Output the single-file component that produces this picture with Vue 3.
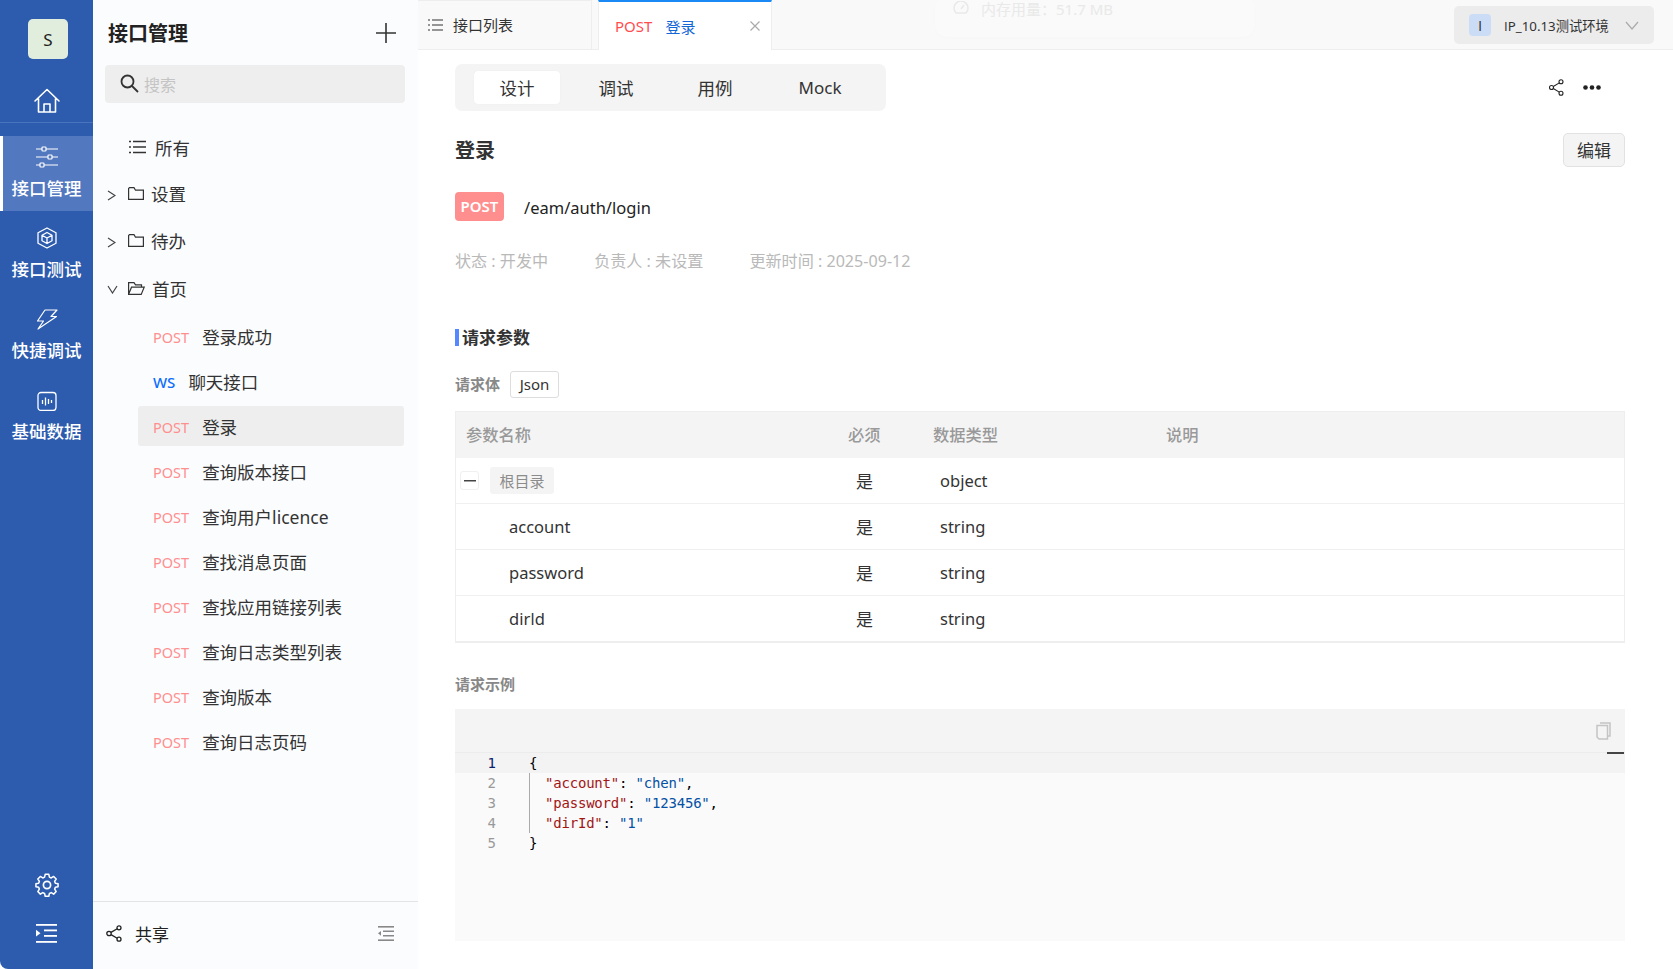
<script setup>
const railItems = [
  { label: '接口管理', icon: 'sliders', active: true },
  { label: '接口测试', icon: 'cube' },
  { label: '快捷调试', icon: 'bolt' },
  { label: '基础数据', icon: 'chart' }
]
const apis = [
  ['POST', '登录成功'], ['WS', '聊天接口'], ['POST', '登录'], ['POST', '查询版本接口'],
  ['POST', '查询用户licence'], ['POST', '查找消息页面'], ['POST', '查找应用链接列表'],
  ['POST', '查询日志类型列表'], ['POST', '查询版本'], ['POST', '查询日志页码']
]
const fields = ['account', 'password']
</script>

<template>
  <div class="app">
    <aside class="rail">
      <div class="avatar">S</div>
      <div class="home">
        <svg width="28" height="28" viewBox="0 0 28 28" fill="none" stroke="#fff" stroke-width="1.6" stroke-linejoin="round" stroke-linecap="round"><path d="M2 14 14 2.5 26 14M5.5 11.5V25h17V11.5M11 25v-8h6v8"/></svg>
      </div>
      <div v-for="item in railItems" :key="item.label" class="rail-item" :class="{ active: item.active }">
        <svg v-if="item.icon === 'sliders'" width="22" height="22" viewBox="0 0 22 22" fill="none" stroke="#fff" stroke-width="1.2"><path d="M0 3h6M10 3h12M0 11h12M16 11h6M0 19h4M8 19h14"/><rect x="6" y="1" width="4" height="4" rx=".8"/><rect x="12" y="9" width="4" height="4" rx=".8"/><rect x="4" y="17" width="4" height="4" rx=".8"/></svg>
        <svg v-else-if="item.icon === 'cube'" width="22" height="22" viewBox="0 0 22 22" fill="none" stroke="#fff" stroke-width="1.3" stroke-linejoin="round"><path d="M11 1 20 5.800V16.200L11 21 2 16.200V5.800Z"/><path d="M11 5.500 16 8.300V13.700L11 16.500 6 13.700V8.300ZM6 8.300l5 2.700 5-2.700M11 11v5.500"/></svg>
        <svg v-else-if="item.icon === 'bolt'" width="22" height="22" viewBox="0 -1 22 22" fill="none" stroke="#fff" stroke-width="1.2" stroke-linejoin="round"><path d="M9 1H21L15 7.500H20.500L2 20 7.500 12H1.500Z"/></svg>
        <svg v-else width="22" height="22" viewBox="-1 -2.500 22 22" fill="none" stroke="#fff" stroke-width="1.3"><rect x="1" y="1" width="18" height="18" rx="3"/><path d="M5.500 8.500v4M8.500 6v8M11.500 7.500v5M14.500 8.500v3"/></svg>
        <span>{{ item.label }}</span>
      </div>
      <div class="rail-bottom">
        <svg width="24" height="24" viewBox="0 0 24 24" fill="none" stroke="#fff" stroke-width="1.7" stroke-linejoin="round"><circle cx="12" cy="12" r="3.600"/><path d="M10 1.500h4l.7 3.100 2 .9 2.700-1.700 2.800 2.900-1.700 2.700.8 2 3 .6v3.300l-3 .6-.8 2 1.700 2.700-2.800 2.900-2.700-1.700-2 .9-.7 3.100h-4l-.7-3.100-2-.9-2.700 1.700-2.800-2.900 1.700-2.700-.8-2-3-.6v-3.300l3-.6.800-2-1.700-2.700 2.800-2.900 2.700 1.700 2-.9z" transform="translate(1.200 0) scale(.9)"/></svg>
        <svg width="22" height="19" viewBox="0 0 22 19" fill="#fff"><rect width="21" height="1.800"/><rect x="8" y="5.500" width="13" height="1.800"/><rect x="8" y="11" width="13" height="1.800"/><rect y="17" width="21" height="1.800"/><path d="M0 5.800 4.500 9.200 0 12.600Z"/></svg>
      </div>
    </aside>

    <section class="panel">
      <header class="panel-head">
        <h2>接口管理</h2>
        <svg width="20" height="20" viewBox="0 0 20 20" stroke="#333" stroke-width="1.600"><path d="M0 10h20M10 0v20"/></svg>
      </header>
      <div class="search">
        <svg width="19" height="19" viewBox="0 0 19 19" fill="none" stroke="#333" stroke-width="1.800"><circle cx="7.500" cy="7.500" r="6"/><path d="m12 12 6 6"/></svg>
        <span>搜索</span>
      </div>
      <div class="tree">
        <div class="tree-row all">
          <svg width="17" height="14" viewBox="0 0 17 14" stroke="#333" stroke-width="1.300"><path d="M4 1.500h13M4 7h13M4 12.500h13M0 1.500h2M0 7h2M0 12.500h2"/></svg>
          <span>所有</span>
        </div>
        <div class="tree-row tall">
          <svg class="chev" width="9" height="11" viewBox="0 0 9 11" fill="none" stroke="#444" stroke-width="1.200"><path d="m1 1 7 4.500L1 10"/></svg>
          <svg width="16" height="13" viewBox="0 0 16 13" fill="none" stroke="#333" stroke-width="1.200"><path d="M.6 1.500V12.400h14.800V3.200H7.500L6 .6H1.500z"/></svg>
          <span>设置</span>
        </div>
        <div class="tree-row">
          <svg class="chev" width="9" height="11" viewBox="0 0 9 11" fill="none" stroke="#444" stroke-width="1.200"><path d="m1 1 7 4.500L1 10"/></svg>
          <svg width="16" height="13" viewBox="0 0 16 13" fill="none" stroke="#333" stroke-width="1.200"><path d="M.6 1.500V12.400h14.800V3.200H7.500L6 .6H1.500z"/></svg>
          <span>待办</span>
        </div>
        <div class="tree-row open">
          <svg class="chev" width="11" height="9" viewBox="0 0 11 9" fill="none" stroke="#444" stroke-width="1.200"><path d="m1 1 4.500 7L10 1"/></svg>
          <svg width="17" height="13" viewBox="0 0 17 13" fill="none" stroke="#333" stroke-width="1.200"><path d="M.6 12.400V.6h5.400l1.500 2.200h6v2.400M.6 12.400h12.600l3-7.200H3.500z"/></svg>
          <span>首页</span>
        </div>
        <div class="api-list">
          <div v-for="(api, i) in apis" :key="api[1]" class="api-row" :class="{ selected: i === 2 }">
            <span class="method" :class="api[0] === 'WS' ? 'ws' : 'post'">{{ api[0] }}</span>
            <span>{{ api[1] }}</span>
          </div>
        </div>
      </div>
      <footer class="panel-foot">
        <svg width="16" height="17" viewBox="0 0 16 17" fill="none" stroke="#222" stroke-width="1.300"><circle cx="3" cy="8.500" r="2.200"/><circle cx="13" cy="2.800" r="2"/><circle cx="13" cy="14.200" r="2"/><path d="m5 7.400 6.200-3.600M5 9.600l6.200 3.600"/></svg>
        <span class="share">共享</span>
        <svg width="16" height="15" viewBox="0 0 16 15" fill="#888"><rect width="16" height="1.600"/><rect x="5" y="4.500" width="11" height="1.500"/><rect x="5" y="9" width="11" height="1.500"/><rect y="13.400" width="16" height="1.600"/><path d="M3 4.900 0 7.300l3 2.400z"/></svg>
      </footer>
    </section>

    <main class="content">
      <nav class="tabs">
        <div class="tab list-tab">
          <svg width="15" height="12" viewBox="0 0 15 12" stroke="#333" stroke-width="1.200"><path d="M4 1h11M4 6h11M4 11h11M0 1h2M0 6h2M0 11h2"/></svg>
          <span>接口列表</span>
        </div>
        <div class="tab open-tab">
          <span class="tab-post">POST</span>
          <span class="tab-name">登录</span>
          <svg width="10" height="10" viewBox="0 0 10 10" stroke="#aaa" stroke-width="1.200"><path d="m.5.5 9 9M9.500.5l-9 9"/></svg>
        </div>
        <div class="env">
          <b class="sans-i">I</b>
          <span><span class="sans-i">I</span>P_10.13测试环境</span>
          <svg width="14" height="9" viewBox="0 0 14 9" fill="none" stroke="#aaa" stroke-width="1.200"><path d="m1 1 6 7 6-7"/></svg>
        </div>
        <div class="ghost">
          <svg width="16" height="14" viewBox="0 0 16 14" fill="none" stroke="#e9e9e9" stroke-width="1.500"><path d="M3 12a7 7 0 1 1 10 0zM8 8l3-4"/></svg>
          <span>内存用量：51.7 MB</span>
        </div>
      </nav>

      <div class="page">
        <div class="toolbar">
          <div class="segments">
            <span class="seg active">设计</span>
            <span class="seg">调试</span>
            <span class="seg">用例</span>
            <span class="seg mock">Mock</span>
          </div>
          <div class="tools">
            <svg width="15" height="17" viewBox="0 0 15 17" fill="none" stroke="#222" stroke-width="1.100"><circle cx="2.500" cy="8.500" r="2"/><circle cx="12" cy="2.800" r="2"/><circle cx="12" cy="14.200" r="2"/><path d="m4.300 7.500 6-3.600M4.300 9.500l6 3.600"/></svg>
            <svg width="18" height="5" viewBox="0 0 18 5" fill="#222"><circle cx="2.500" cy="2.500" r="2.300"/><circle cx="9" cy="2.500" r="2.300"/><circle cx="15.500" cy="2.500" r="2.300"/></svg>
          </div>
        </div>

        <div class="title-row">
          <h1>登录</h1>
          <button class="edit">编辑</button>
        </div>

        <div class="path-row">
          <span class="badge">POST</span>
          <span class="path">/eam/auth/login</span>
        </div>

        <div class="meta">
          <span>状态 : 开发中</span>
          <span>负责人 : 未设置</span>
          <span>更新时间 : 2025-09-12</span>
        </div>

        <h3 class="section">请求参数</h3>

        <div class="body-type">
          <span class="label">请求体</span>
          <span class="json">Json</span>
        </div>

        <div class="table">
          <div class="tr th">
            <span>参数名称</span><span>必须</span><span>数据类型</span><span>说明</span>
          </div>
          <div class="tr td">
            <span class="root">
              <i class="minus"></i>
              <em>根目录</em>
            </span>
            <span class="req">是</span><span class="type">object</span><span></span>
          </div>
          <div v-for="f in fields" :key="f" class="tr td">
            <span class="field">{{ f }}</span>
            <span class="req">是</span><span class="type">string</span><span></span>
          </div>
          <div class="tr td">
            <span class="field">dir<span class="sans-i">I</span>d</span>
            <span class="req">是</span><span class="type">string</span><span></span>
          </div>
        </div>

        <div class="label example">请求示例</div>

        <div class="code">
          <div class="code-head">
            <svg width="15" height="18" viewBox="0 0 15 18" fill="none" stroke="#c4c4c4" stroke-width="1.500"><path d="M4 1h10v13h-2"/><path d="M1 3.500h10.500V17H3l-2-2z"/></svg>
            <i class="cursor"></i>
          </div>
          <div class="code-body">
            <div class="ln current"><span class="no">1</span><span class="src">{</span></div>
            <div class="ln"><span class="no">2</span><span class="src guide"><span class="k">"account"</span>: <span class="s">"chen"</span>,</span></div>
            <div class="ln"><span class="no">3</span><span class="src guide"><span class="k">"password"</span>: <span class="s">"123456"</span>,</span></div>
            <div class="ln"><span class="no">4</span><span class="src guide"><span class="k">"dirId"</span>: <span class="s">"1"</span></span></div>
            <div class="ln"><span class="no">5</span><span class="src">}</span></div>
          </div>
        </div>
      </div>
    </main>
  </div>
</template>

<style>
html, body { margin: 0; background: #fff; overflow: hidden; }
</style>

<style scoped>
.app {
  display: grid;
  grid-template-columns: 93px 325px 1fr;
  width: 1673px;
  height: 969px;
  overflow: hidden;
  font-family: "Noto Sans", "Noto Sans CJK SC", sans-serif;
  color: #333;
  font-size: 17px;
}
.sans-i { font-family: "Open Sans", "Noto Sans", sans-serif; }
.rail {
  display: flex;
  flex-direction: column;
  align-items: stretch;
  background: #2d5cae;
  color: #fff;
  border-bottom-left-radius: 8px;
}
.avatar {
  width: 40px;
  height: 40px;
  margin: 19px 0 0 28px;
  background: #e1eedd;
  color: #222;
  border-radius: 5px;
  display: flex;
  align-items: center;
  justify-content: center;
  font-size: 17px;
}
.home {
  height: 64px;
  box-sizing: border-box;
  padding-top: 20px;
  display: flex;
  align-items: center;
  justify-content: center;
  border-bottom: 1px solid #4a74bd;
  margin-bottom: 13px;
}
.rail-item {
  height: 75px;
  margin-bottom: 6px;
  display: flex;
  flex-direction: column;
  align-items: center;
  justify-content: flex-start;
  gap: 8px;
  padding-top: 10px;
  box-sizing: border-box;
  font-weight: 500;
  line-height: 24px;
  font-size: 17.500px;
}
.rail-item svg { flex: none; }
.rail-item.active {
  background: #5278bf;
  border-left: 3px solid #fff;
  padding-right: 3px;
}
.rail-bottom {
  margin-top: auto;
  display: flex;
  flex-direction: column;
  align-items: center;
  gap: 27px;
  padding-bottom: 26px;
}

.panel {
  background: #fbfcfe;
  display: flex;
  flex-direction: column;
  font-size: 17.500px;
}
.panel-head {
  height: 65px;
  padding: 0 22px 0 15px;
  display: flex;
  align-items: center;
  justify-content: space-between;
}
.panel-head h2 {
  margin: 0;
  font-size: 20px;
  font-weight: 700;
  color: #222;
}
.search {
  margin-left: 12px;
  width: 300px;
  height: 38px;
  box-sizing: border-box;
  padding: 0 0 1px 15px;
  background: #eee;
  border-radius: 4px;
  display: flex;
  align-items: center;
  gap: 5px;
  color: #c4c4c4;
  font-size: 16px;
}
.tree { flex: 1; padding-top: 21px; }
.tree-row {
  height: 46px;
  display: flex;
  align-items: center;
  padding-left: 35px;
  position: relative;
  gap: 7px;
  color: #333;
}
.tree-row.tall { height: 47px; }
.tree-row.all { gap: 9px; padding-left: 36px; }
.tree-row.open { margin-top: 2px; }
.tree-row .chev { position: absolute; left: 14px; top: 20px; }
.api-list { display: flex; flex-direction: column; gap: 5px; padding-top: 5px; }
.api-row {
  height: 40px;
  margin-left: 45px;
  width: 266px;
  box-sizing: border-box;
  padding-left: 15px;
  display: flex;
  align-items: center;
  gap: 13px;
  border-radius: 3px;
  color: #333;
}
.api-row.selected { background: #eee; }
.method { font-size: 14.500px; position: relative; top: 1px; }
.method.post { color: #ff8f8f; }
.method.ws { color: #0d6efd; font-weight: 500; font-size: 15px; }
.panel-foot {
  height: 68px;
  box-sizing: border-box;
  border-top: 1px solid #e4e4e4;
  display: flex;
  align-items: center;
  padding: 0 24px 4px 13px;
  gap: 13px;
}
.share { flex: 1; color: #222; font-size: 17px; }

.content { display: flex; flex-direction: column; min-width: 0; background: #fff; }
.tabs {
  height: 50px;
  box-sizing: border-box;
  background: #f9f9f9;
  border-bottom: 1px solid #eee;
  display: flex;
  position: relative;
}
.tab { height: 50px; box-sizing: border-box; display: flex; align-items: center; }
.list-tab {
  width: 174px;
  padding: 0 0 2px 10px;
  gap: 10px;
  border-right: 1px solid #eee;
  border-top: 1px solid #eee;
  font-size: 15px;
  color: #333;
}
.open-tab {
  margin-left: 6px;
  width: 174px;
  padding: 0 11px 0 16px;
  background: #fff;
  border-top: 2px solid #1a88f5;
  border-left: 1px solid #eee;
  border-right: 1px solid #eee;
  font-size: 15px;
}
.tab-post { color: #ff4d4f; margin-right: 13px; }
.tab-name { color: #1366d6; flex: 1; }
.env {
  margin: 6px 19px 0 auto;
  width: 200px;
  height: 38px;
  box-sizing: border-box;
  background: #ececec;
  border-radius: 5px;
  display: flex;
  align-items: center;
  padding: 0 15px;
  font-size: 13.300px;
  color: #333;
}
.env b {
  width: 22px;
  height: 22px;
  border-radius: 4px;
  background: #cbdcf6;
  font-weight: 400;
  font-size: 15px;
  display: flex;
  align-items: center;
  justify-content: center;
  margin-right: 13px;
}
.env > span { flex: 1; }
.ghost {
  position: absolute;
  left: 517px;
  top: -4px;
  width: 320px;
  height: 41px;
  box-sizing: border-box;
  padding: 0 0 17px 18px;
  display: flex;
  align-items: center;
  gap: 12px;
  border-radius: 12px;
  background: #fafafa;
  color: #e9e9e9;
  font-size: 15px;
  box-shadow: 0 1px 3px rgba(0, 0, 0, .015);
}

.page { flex: 1; padding: 14px 48px 0 37px; min-height: 0; }
.toolbar { display: flex; align-items: center; justify-content: space-between; height: 47px; }
.segments {
  width: 431px;
  height: 47px;
  box-sizing: border-box;
  background: #f4f4f4;
  border-radius: 7px;
  padding: 7px 0 0 19px;
  display: grid;
  grid-template-columns: 86px 13px 86px 13px 86px 13px 86px;
  font-size: 17.500px;
}
.seg { height: 33px; display: flex; align-items: center; justify-content: center; color: #333; border-radius: 4px; }
.seg:nth-child(2) { grid-column: 3; }
.seg:nth-child(3) { grid-column: 5; }
.seg:nth-child(4) { grid-column: 7; }
.seg.mock { padding-left: 12px; box-sizing: border-box; font-size: 17px; }
.seg.active { background: #fff; box-shadow: 0 0 1px rgba(0,0,0,.08); }
.tools { display: flex; align-items: center; gap: 19px; margin-right: 24px; }

.title-row {
  margin-top: 22px;
  height: 34px;
  display: flex;
  align-items: center;
  justify-content: space-between;
}
.title-row h1 { margin: 0 0 1px; font-size: 20px; font-weight: 700; color: #333; }
.edit {
  width: 62px;
  height: 34px;
  box-sizing: border-box;
  background: #f4f4f4;
  border: 1px solid #e2e2e2;
  border-radius: 5px;
  font: inherit;
  color: #333;
  padding: 0 0 2px;
}
.path-row { margin-top: 25px; display: flex; align-items: center; gap: 20px; height: 29px; }
.badge {
  width: 49px;
  height: 29px;
  box-sizing: border-box;
  padding-bottom: 2px;
  background: #ff8f8f;
  border-radius: 4px;
  color: #fff;
  font-size: 15px;
  font-weight: 600;
  display: flex;
  align-items: center;
  justify-content: center;
}
.path { font-size: 16.500px; color: #222; padding-top: 2px; }
.meta { margin-top: 26px; display: flex; gap: 46px; color: #b9b9b9; font-size: 16.100px; line-height: 28px; }
.section {
  margin: 54px 0 0;
  font-size: 17px;
  font-weight: 700;
  color: #333;
  border-left: 4px solid #5588ff;
  padding-left: 3px;
  height: 17px;
  line-height: 17px;
}
.body-type { margin-top: 25px; height: 28px; display: flex; align-items: center; gap: 10px; }
.body-type .label { padding-bottom: 4px; }
.label { font-size: 15px; font-weight: 700; color: #888; }
.json {
  width: 49px;
  height: 27px;
  box-sizing: border-box;
  margin-top: -2px;
  border: 1px solid #ddd;
  border-radius: 3px;
  display: flex;
  align-items: center;
  justify-content: center;
  font-size: 15px;
}
.table { margin-top: 12px; border: 1px solid #eee; border-bottom-width: 2px; font-size: 16.500px; }
.tr { display: grid; grid-template-columns: 392px 85px 233px 1fr; align-items: center; }
.th { height: 46px; box-sizing: border-box; padding-bottom: 2px; background: #f4f4f4; color: #999; font-size: 16.300px; font-weight: 500; }
.th span:first-child { padding-left: 10px; }
.td { height: 46px; box-sizing: border-box; border-top: 1px solid #f0f0f0; }
.th + .td { border-top: 0; height: 45px; }
.req { padding-left: 8px; font-size: 17px; }
.type { padding-left: 7px; color: #333; }
.field { padding-left: 53px; }
.root { display: flex; align-items: center; gap: 11px; padding-left: 4px; }
.minus {
  width: 19px;
  height: 19px;
  box-sizing: border-box;
  border: 1px solid #f0f0f0;
  border-radius: 3px;
  background: linear-gradient(#444, #444) center / 12px 1.500px no-repeat #fff;
}
.root em {
  width: 64px;
  height: 27px;
  background: #f4f4f4;
  border-radius: 3px;
  font-style: normal;
  font-size: 15px;
  color: #8c8c8c;
  display: flex;
  align-items: center;
  justify-content: center;
}
.example { margin-top: 29px; line-height: 24px; }
.code { margin-top: 13px; height: 232px; background: #fafafa; }
.code-head {
  height: 44px;
  box-sizing: border-box;
  background: #f4f4f4;
  border-bottom: 1px solid #ececec;
  display: flex;
  justify-content: flex-end;
  align-items: center;
  padding-right: 14px;
  position: relative;
}
.cursor {
  position: absolute;
  right: 1px;
  bottom: -2px;
  width: 17px;
  height: 2px;
  background: #444;
}
.code-body { font-family: "DejaVu Sans Mono", monospace; font-size: 14px; line-height: 20px; color: #000; }
.ln { display: flex; height: 20px; }
.ln.current { background: #f3f3f3; }
.no { width: 41px; text-align: right; color: #999; flex: none; }
.current .no { color: #0b216f; }
.src { margin-left: 33px; letter-spacing: -.2px; white-space: pre; }
.guide { border-left: 1px solid #aaa; padding-left: 15px; }
.k { color: #a31515; }
.s { color: #0451a5; }
</style>
